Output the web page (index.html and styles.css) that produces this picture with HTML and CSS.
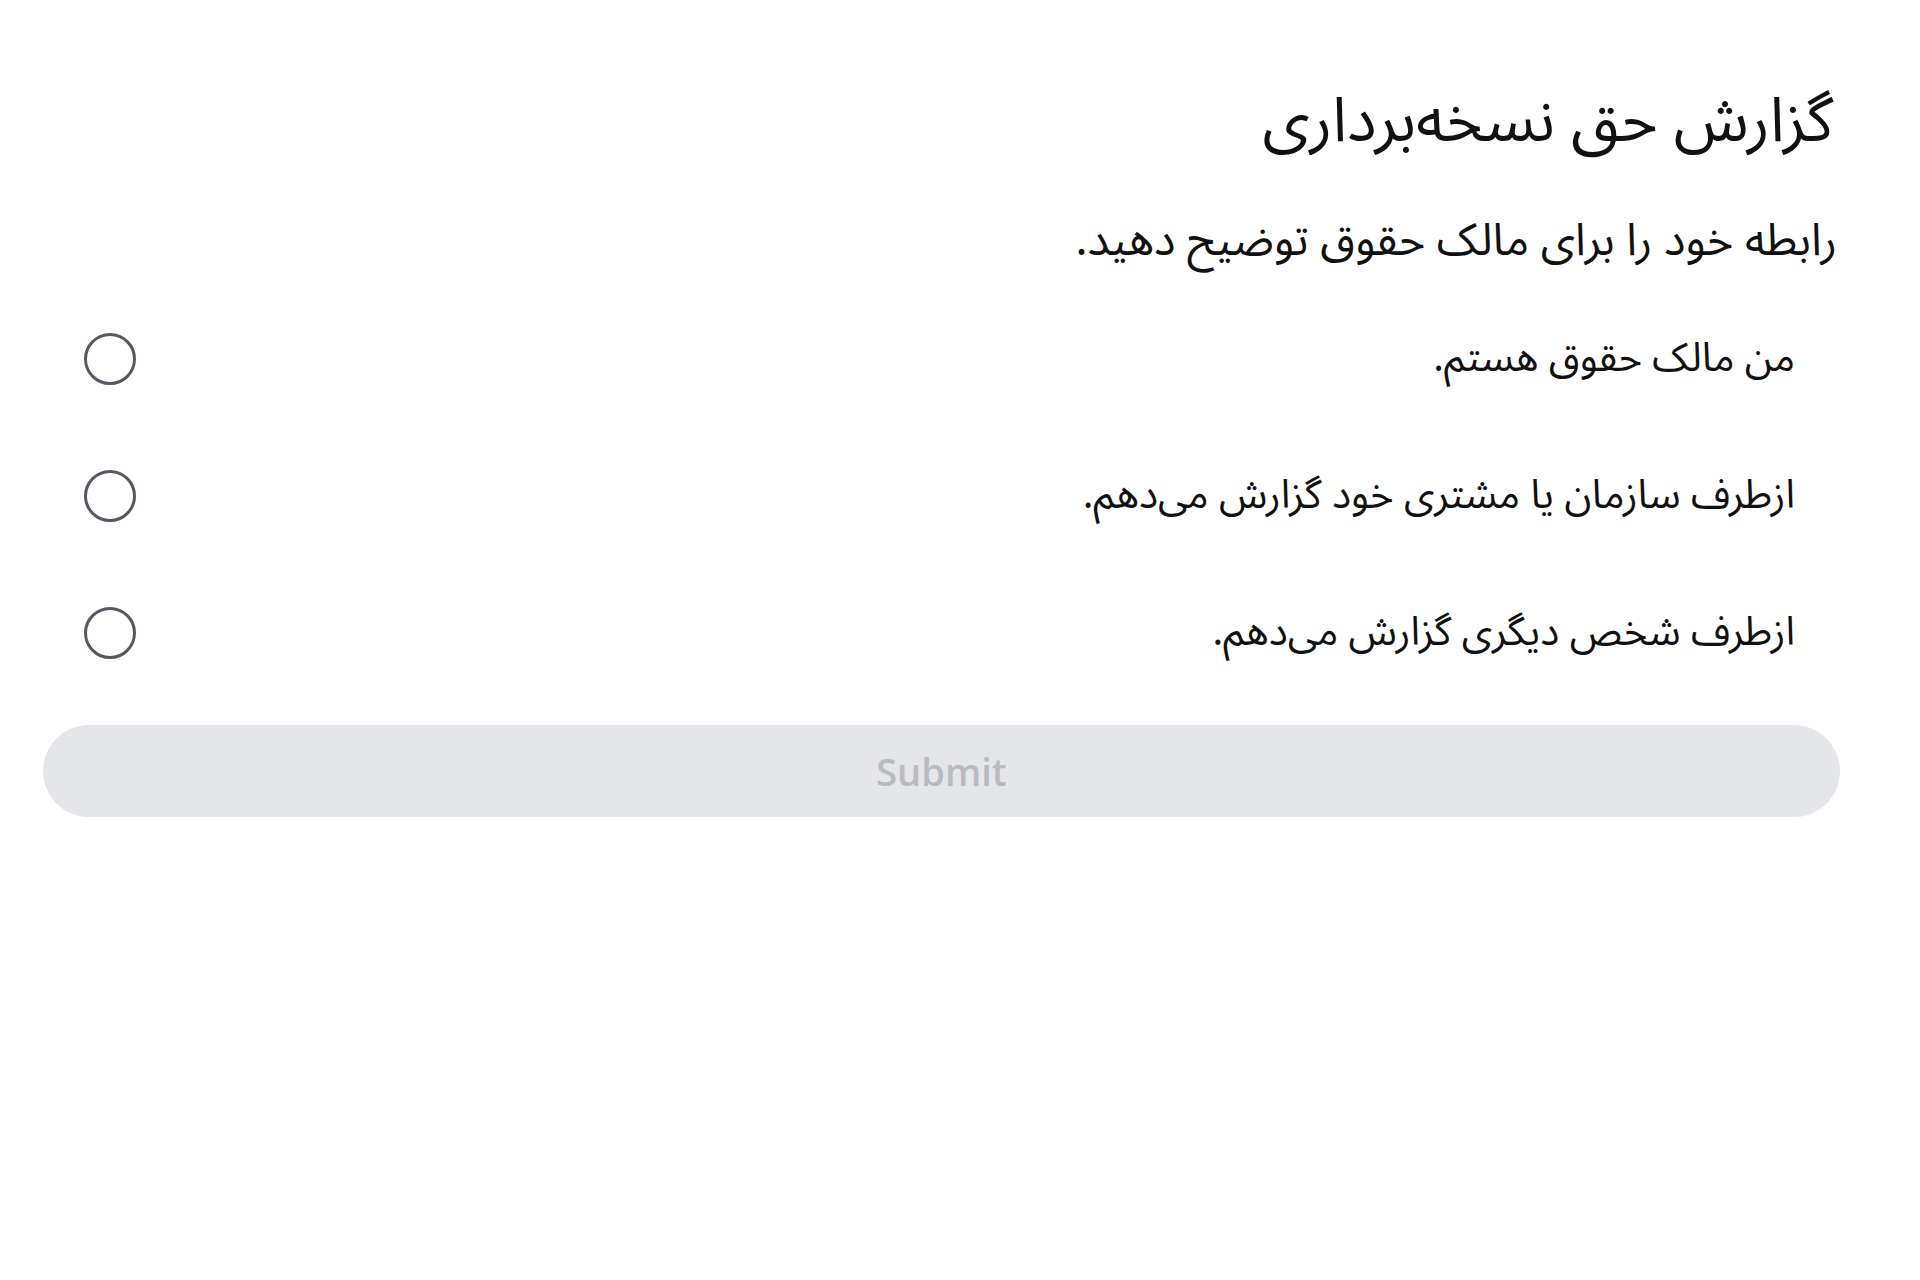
FILE: index.html
```html
<!DOCTYPE html>
<html lang="fa" dir="rtl">
<head>
<meta charset="utf-8">
<title>گزارش حق نسخه‌برداری</title>
<link rel="stylesheet" href="styles.css">
</head>
<body>
<main class="page">
  <h1 class="title">گزارش حق نسخه‌برداری</h1>
  <p class="subtitle">رابطه خود را برای مالک حقوق توضیح دهید.</p>
  <div class="options">
    <label class="option">
      <span class="option-text">من مالک حقوق هستم.</span>
      <span class="radio"></span>
    </label>
    <label class="option">
      <span class="option-text">ازطرف سازمان یا مشتری خود گزارش می‌دهم.</span>
      <span class="radio"></span>
    </label>
    <label class="option">
      <span class="option-text">ازطرف شخص دیگری گزارش می‌دهم.</span>
      <span class="radio"></span>
    </label>
  </div>
  <button class="submit" type="button" disabled>Submit</button>
</main>
</body>
</html>
```

FILE: styles.css
```css
html, body {
  margin: 0;
  padding: 0;
  background: #ffffff;
}

body {
  font-family: "Noto Sans Arabic", "Noto Naskh Arabic", "DejaVu Sans", sans-serif;
  color: #111111;
}

.page {
  display: flex;
  flex-direction: column;
  padding: 82px 80px 0 43px;
}

.title {
  margin: 0;
  padding-right: 7px;
  font-size: 62px;
  font-weight: 400;
  line-height: 80px;
}

.subtitle {
  margin: 49px 0 0 0;
  padding-right: 3px;
  font-size: 45px;
  line-height: 60px;
}

.options {
  display: flex;
  flex-direction: column;
  margin-top: 19px;
}

.option {
  display: flex;
  align-items: center;
  justify-content: space-between;
  height: 137px;
  padding: 0 45px 0 41px;
}

.option-text {
  font-size: 40px;
  line-height: 60px;
}

.radio {
  width: 52px;
  height: 52px;
  box-sizing: border-box;
  border: 3px solid #555a62;
  border-radius: 50%;
  flex: none;
}

.submit {
  margin-top: 24px;
  height: 92px;
  border: none;
  border-radius: 46px;
  background: #e5e6ea;
  color: #b9bac0;
  font-family: "Open Sans", sans-serif;
  font-weight: 600;
  font-size: 38px;
  direction: ltr;
}
```
